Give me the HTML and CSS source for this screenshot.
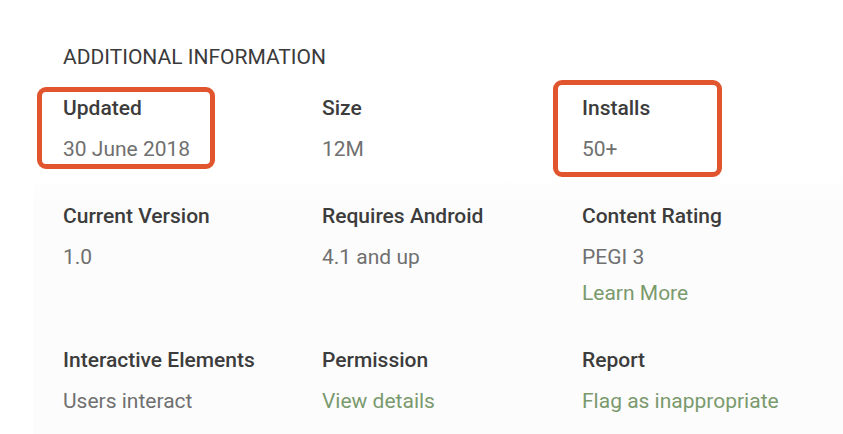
FILE: index.html
```html
<!DOCTYPE html>
<html lang="en">
  <head>
    <meta charset="UTF-8" />
    <meta name="viewport" content="width=device-width, initial-scale=1.0" />
    <title>Additional Information</title>
    <link rel="stylesheet" href="styles.css">
  </head>
  <body>
    <div class="panel">
      <h2 class="heading">ADDITIONAL INFORMATION</h2>
      <div class="details">
        <div class="cell">
          <div class="mark mark-updated"></div>
          <div class="label">Updated</div>
          <div class="value">30 June 2018</div>
        </div>
        <div class="cell">
          <div class="label">Size</div>
          <div class="value">12M</div>
        </div>
        <div class="cell">
          <div class="mark mark-installs"></div>
          <div class="label">Installs</div>
          <div class="value">50+</div>
        </div>

        <div class="cell">
          <div class="label">Current Version</div>
          <div class="value">1.0</div>
        </div>
        <div class="cell">
          <div class="label">Requires Android</div>
          <div class="value">4.1 and up</div>
        </div>
        <div class="cell">
          <div class="label">Content Rating</div>
          <div class="value">PEGI 3</div>
          <a class="value link" href="#">Learn More</a>
        </div>

        <div class="cell">
          <div class="label">Interactive Elements</div>
          <div class="value">Users interact</div>
        </div>
        <div class="cell">
          <div class="label">Permission</div>
          <a class="value link" href="#">View details</a>
        </div>
        <div class="cell">
          <div class="label">Report</div>
          <a class="value link" href="#">Flag as inappropriate</a>
        </div>
      </div>
    </div>
  </body>
</html>
```

FILE: styles.css
```css
* {
  padding: 0;
  margin: 0;
  box-sizing: border-box;
}

body {
  font-family: Roboto, 'Liberation Sans', sans-serif;
  background: #ffffff;
  width: 843px;
  height: 434px;
  overflow: hidden;
}

.panel {
  margin-left: 33px;
  padding: 43px 0 0 30px;
  min-height: 434px;
  background: linear-gradient(#ffffff 0, #ffffff 175px, #fcfcfc 200px);
}

.heading {
  font-size: 21px;
  font-weight: 400;
  line-height: 28px;
  color: #3a3a3a;
  margin-bottom: 19px;
}

.details {
  display: grid;
  grid-template-columns: 259px 260px 240px;
  row-gap: 31px;
}

.cell {
  position: relative;
  display: flex;
  flex-direction: column;
  align-items: flex-start;
}

.label {
  font-size: 21px;
  font-weight: 500;
  line-height: 36px;
  color: #3c3c3c;
  margin-bottom: 5px;
}

.value {
  font-size: 21px;
  font-weight: 400;
  line-height: 36px;
  color: #707070;
  text-decoration: none;
}

.link {
  color: #7a9a6d;
}

.mark {
  position: absolute;
  border: 5px solid #e0552d;
  border-radius: 9px;
}

.mark-updated {
  left: -26px;
  top: -3px;
  width: 178px;
  height: 82px;
}

.mark-installs {
  left: -29px;
  top: -10px;
  width: 169px;
  height: 97px;
}
```
